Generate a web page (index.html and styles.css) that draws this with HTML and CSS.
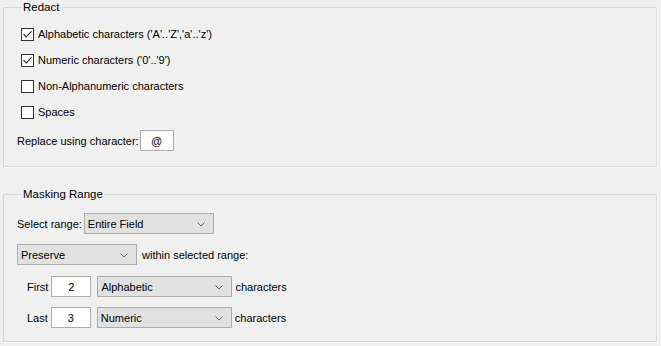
FILE: index.html
```html
<!DOCTYPE html>
<html>
<head>
<meta charset="utf-8">
<link rel="stylesheet" href="styles.css">
</head>
<body>
<fieldset class="group group-redact">
  <legend class="group-title">Redact</legend>
  <div class="check-list">
    <label class="check-row"><span class="check checked"><svg viewBox="0 0 11 11" width="11" height="11"><path d="M1.5 5.2 L4.2 8 L9.6 2.4" fill="none" stroke="#333" stroke-width="1.2"/></svg></span><span>Alphabetic characters ('A'..'Z','a'..'z')</span></label>
    <label class="check-row"><span class="check checked"><svg viewBox="0 0 11 11" width="11" height="11"><path d="M1.5 5.2 L4.2 8 L9.6 2.4" fill="none" stroke="#333" stroke-width="1.2"/></svg></span><span>Numeric characters ('0'..'9')</span></label>
    <label class="check-row"><span class="check"></span><span>Non-Alphanumeric characters</span></label>
    <label class="check-row"><span class="check"></span><span>Spaces</span></label>
  </div>
  <div class="field-row replace-row">
    <span>Replace using character:</span>
    <span class="textbox textbox-char">@</span>
  </div>
</fieldset>

<fieldset class="group group-range">
  <legend class="group-title">Masking Range</legend>
  <div class="range-rows">
    <div class="field-row select-row">
      <span>Select range:</span>
      <span class="combo combo-range"><span>Entire Field</span><svg class="chev" viewBox="0 0 8 5" width="8" height="5"><path d="M0.5 0.5 L4 4 L7.5 0.5" fill="none" stroke="#666" stroke-width="1"/></svg></span>
    </div>
    <div class="field-row">
      <span class="combo combo-mode"><span>Preserve</span><svg class="chev" viewBox="0 0 8 5" width="8" height="5"><path d="M0.5 0.5 L4 4 L7.5 0.5" fill="none" stroke="#666" stroke-width="1"/></svg></span>
      <span>within selected range:</span>
    </div>
    <div class="field-row indent first-row">
      <span class="row-label">First</span>
      <span class="textbox textbox-num">2</span>
      <span class="combo combo-type"><span>Alphabetic</span><svg class="chev" viewBox="0 0 8 5" width="8" height="5"><path d="M0.5 0.5 L4 4 L7.5 0.5" fill="none" stroke="#666" stroke-width="1"/></svg></span>
      <span>characters</span>
    </div>
    <div class="field-row indent">
      <span class="row-label">Last</span>
      <span class="textbox textbox-num">3</span>
      <span class="combo combo-type"><span>Numeric</span><svg class="chev" viewBox="0 0 8 5" width="8" height="5"><path d="M0.5 0.5 L4 4 L7.5 0.5" fill="none" stroke="#666" stroke-width="1"/></svg></span>
      <span>characters</span>
    </div>
  </div>
</fieldset>
</body>
</html>
```
FILE: styles.css
```css
html, body {
  margin: 0;
  padding: 0;
  background: #f0f0f0;
}
body {
  font-family: "Liberation Sans", Arial, sans-serif;
  font-size: 11px;
  color: #000;
  width: 661px;
  height: 346px;
  overflow: hidden;
}
.group {
  box-sizing: border-box;
  width: 654px;
  margin: 0 0 0 3px;
  border: 1px solid #d9d9d9;
  box-shadow: 1px 1px 0 #fafafa;
  padding: 7px 0 15px 13px;
}
.group-title {
  margin-left: 5px;
  padding: 0 1px;
  line-height: 14px;
  font-size: 11.5px;
}
.group-range {
  margin-top: 20px;
  padding-top: 12px;
  padding-bottom: 13px;
}
.check-list {
  display: flex;
  flex-direction: column;
}
.check-row {
  display: flex;
  align-items: center;
  height: 26px;
  gap: 4px;
  padding-left: 4px;
}
.check {
  box-sizing: border-box;
  width: 13px;
  height: 13px;
  border: 1px solid #333;
  background: #fff;
  display: flex;
  align-items: center;
  justify-content: center;
}
.field-row {
  display: flex;
  align-items: center;
  gap: 5px;
  height: 21px;
}
.replace-row {
  margin-top: 5px;
  gap: 1px;
}
.select-row {
  gap: 2px;
}
.range-rows {
  display: flex;
  flex-direction: column;
  gap: 10px;
}
.first-row {
  margin-top: 1px;
}
.indent {
  padding-left: 10px;
  gap: 3px;
}
.textbox {
  box-sizing: border-box;
  height: 21px;
  background: #fff;
  border: 1px solid #abadb3;
  display: flex;
  align-items: center;
  justify-content: center;
}
.textbox-char {
  width: 34px;
}
.textbox-num {
  width: 40px;
  margin-right: 3px;
}
.combo {
  box-sizing: border-box;
  height: 21px;
  background: #e1e1e1;
  border: 1px solid #adadad;
  display: flex;
  align-items: center;
  justify-content: space-between;
  padding: 0 8px 0 3px;
}
.combo-range { width: 130px; }
.combo-mode { width: 120px; }
.combo-type { width: 135px; }
.chev {
  margin-top: 2px;
}
```
